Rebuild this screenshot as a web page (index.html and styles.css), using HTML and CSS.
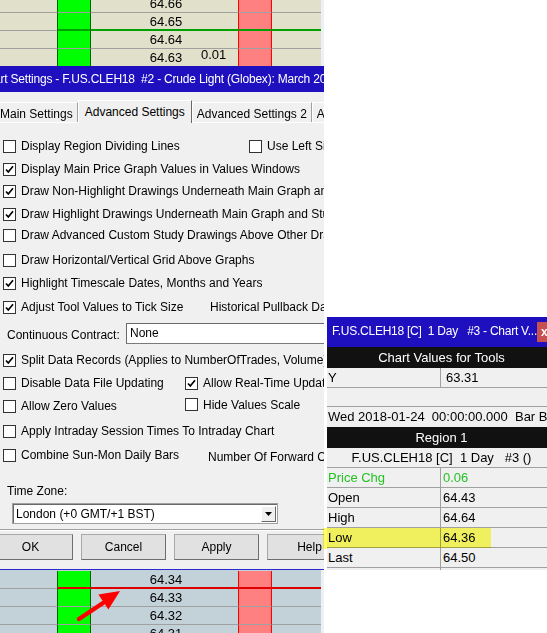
FILE: index.html
```html
<!DOCTYPE html>
<html lang="en">
<head>
<meta charset="utf-8">
<title>Chart Settings</title>
<link rel="stylesheet" href="styles.css">
</head>
<body>
<div class="screen">
  <div class="left">
    <div class="chart chart-top">
      <div class="ladder top-ladder">
        <div class="lrow"><span class="cell"></span><span class="cell g"></span><span class="cell p">64.66</span><span class="cell r"></span><span class="cell"></span></div>
        <div class="lrow mark-green"><span class="cell"></span><span class="cell g"></span><span class="cell p">64.65</span><span class="cell r"></span><span class="cell"></span></div>
        <div class="lrow"><span class="cell"></span><span class="cell g"></span><span class="cell p">64.64</span><span class="cell r"></span><span class="cell"></span></div>
        <div class="lrow"><span class="cell"></span><span class="cell g"></span><span class="cell p">64.63<span class="delta">0.01</span></span><span class="cell r"></span><span class="cell"></span></div>
      </div>
    </div>

    <div class="dialog">
      <div class="titlebar"><span class="title-text">Chart Settings - F.US.CLEH18  #2 - Crude Light (Globex): March 2018</span></div>
      <div class="dlg-body">
        <div class="tabs">
          <div class="tab">Main Settings</div>
          <div class="tab tab-active">Advanced Settings</div>
          <div class="tab">Advanced Settings 2</div>
          <div class="tab">Advanced Settings 3</div>
        </div>
        <div class="page">
          <div class="row">
            <label class="cb col-a"><span class="box"></span>Display Region Dividing Lines</label>
            <label class="cb"><span class="box"></span>Use Left Side Scale</label>
          </div>
          <div class="row mt3">
            <label class="cb"><span class="box"><svg viewBox="0 0 11 11" class="tick"><polyline points="2,5.5 4.3,8 9,2.3"/></svg></span>Display Main Price Graph Values in Values Windows</label>
          </div>
          <div class="row mt2">
            <label class="cb"><span class="box"><svg viewBox="0 0 11 11" class="tick"><polyline points="2,5.5 4.3,8 9,2.3"/></svg></span>Draw Non-Highlight Drawings Underneath Main Graph and Studies</label>
          </div>
          <div class="row mt3">
            <label class="cb"><span class="box"><svg viewBox="0 0 11 11" class="tick"><polyline points="2,5.5 4.3,8 9,2.3"/></svg></span>Draw Highlight Drawings Underneath Main Graph and Studies</label>
          </div>
          <div class="row mt1">
            <label class="cb"><span class="box"></span>Draw Advanced Custom Study Drawings Above Other Drawings</label>
          </div>
          <div class="row mt5">
            <label class="cb"><span class="box"></span>Draw Horizontal/Vertical Grid Above Graphs</label>
          </div>
          <div class="row mt3">
            <label class="cb"><span class="box"><svg viewBox="0 0 11 11" class="tick"><polyline points="2,5.5 4.3,8 9,2.3"/></svg></span>Highlight Timescale Dates, Months and Years</label>
          </div>
          <div class="row mt4">
            <label class="cb col-c"><span class="box"><svg viewBox="0 0 11 11" class="tick"><polyline points="2,5.5 4.3,8 9,2.3"/></svg></span>Adjust Tool Values to Tick Size</label>
            <span class="plain">Historical Pullback Data</span>
          </div>

          <div class="row cc-row mt6">
            <span class="cc-label">Continuous Contract:</span>
            <span class="edit">None</span>
          </div>

          <div class="row mt6">
            <label class="cb"><span class="box"><svg viewBox="0 0 11 11" class="tick"><polyline points="2,5.5 4.3,8 9,2.3"/></svg></span>Split Data Records (Applies to NumberOfTrades, Volume)</label>
          </div>
          <div class="row mt3">
            <label class="cb col-b"><span class="box"></span>Disable Data File Updating</label>
            <label class="cb"><span class="box"><svg viewBox="0 0 11 11" class="tick"><polyline points="2,5.5 4.3,8 9,2.3"/></svg></span>Allow Real-Time Updating</label>
          </div>
          <div class="row mt3">
            <label class="cb col-b"><span class="box"></span>Allow Zero Values</label>
            <label class="cb lift"><span class="box"></span>Hide Values Scale</label>
          </div>
          <div class="row mt5">
            <label class="cb"><span class="box"></span>Apply Intraday Session Times To Intraday Chart</label>
          </div>
          <div class="row mt4">
            <label class="cb col-d"><span class="box"></span>Combine Sun-Mon Daily Bars</label>
            <span class="plain drop">Number Of Forward Columns</span>
          </div>

          <div class="tz-label">Time Zone:</div>
          <div class="combo">
            <span class="combo-text">London (+0 GMT/+1 BST)</span>
            <span class="combo-btn"><svg viewBox="0 0 7 4" class="arrow"><polygon points="0,0 7,0 3.5,4"/></svg></span>
          </div>

          <div class="separator"></div>

          <div class="buttons">
            <span class="btn">OK</span>
            <span class="btn">Cancel</span>
            <span class="btn">Apply</span>
            <span class="btn">Help</span>
          </div>
        </div>
      </div>
    </div>

    <div class="chart chart-bottom">
      <div class="ladder">
        <div class="lrow mark-red"><span class="cell"></span><span class="cell g"></span><span class="cell p">64.34</span><span class="cell r"></span><span class="cell"></span></div>
        <div class="lrow"><span class="cell"></span><span class="cell g"></span><span class="cell p">64.33</span><span class="cell r"></span><span class="cell"></span></div>
        <div class="lrow"><span class="cell"></span><span class="cell g"></span><span class="cell p">64.32</span><span class="cell r"></span><span class="cell"></span></div>
        <div class="lrow"><span class="cell"></span><span class="cell g"></span><span class="cell p">64.31</span><span class="cell r"></span><span class="cell"></span></div>
      </div>
      <svg class="pointer" viewBox="0 0 140 62" width="140" height="62">
        <line x1="79" y1="49" x2="103" y2="33" class="shaft"/>
        <polygon points="120,21 108.4,39.6 98.4,24.6" class="head"/>
      </svg>
    </div>
  </div>

  <div class="right">
    <div class="cvw">
      <div class="cvw-title">
        <span class="cvw-title-text">F.US.CLEH18 [C]  1 Day   #3 - Chart V...</span>
        <span class="close">x</span>
      </div>
      <div class="cvw-head">Chart Values for Tools</div>
      <div class="cvw-row"><span class="k">Y</span><span class="v v-wide">63.31</span></div>
      <div class="cvw-blank"></div>
      <div class="cvw-date">Wed 2018-01-24  00:00:00.000  Bar Begin</div>
      <div class="cvw-head">Region 1</div>
      <div class="cvw-sym">F.US.CLEH18 [C]  1 Day   #3 ()</div>
      <div class="cvw-row up"><span class="k">Price Chg</span><span class="v">0.06</span></div>
      <div class="cvw-row"><span class="k">Open</span><span class="v">64.43</span></div>
      <div class="cvw-row"><span class="k">High</span><span class="v">64.64</span></div>
      <div class="cvw-row hl"><span class="k">Low</span><span class="v">64.36</span></div>
      <div class="cvw-row"><span class="k">Last</span><span class="v">64.50</span></div>
      <div class="cvw-tail"><span class="k"></span><span></span></div>
    </div>
  </div>
</div>
</body>
</html>
```

FILE: styles.css
```css
* { box-sizing: border-box; }
html, body { margin: 0; padding: 0; }
body {
  width: 547px;
  height: 633px;
  overflow: hidden;
  background: #ffffff;
  font-family: "Liberation Sans", Arial, sans-serif;
  color: #000;
}
.screen { display: flex; width: 547px; height: 633px; overflow: hidden; }
.left { flex: none; width: 324px; display: flex; flex-direction: column; }

/* price ladders */
.chart { position: relative; overflow: hidden; flex: none; border-right: 3px solid #EDF0F4; }
.chart-top { height: 66px; background: #E0E0CB; }
.chart-bottom { flex: 1; background: #C3D1D9; padding-top: 1px; }
.top-ladder { margin-top: -5px; }
.lrow { display: grid; grid-template-columns: 57px 34px 147px 34px 49px; height: 18px; }
.cell { border-bottom: 1px solid #A0A0A0; }
.g { background: #00FF00; border-left: 1px solid #006400; border-right: 1px solid #006400; }
.r { background: #FF8080; border-left: 1px solid #FF0000; border-right: 1px solid #FF0000; }
.p { position: relative; display: flex; align-items: center; justify-content: center; padding-left: 3px; font-size: 13px; }
.mark-green .cell:not(:first-child) { border-bottom: 2px solid #00A000; }
.mark-red .cell:not(:first-child) { border-bottom: 2px solid #E00000; }
.delta { position: absolute; left: 110px; top: -2px; font-size: 13px; }
.pointer { position: absolute; left: 0; top: 0; }
.shaft { stroke: #FF0000; stroke-width: 4.5; stroke-linecap: round; }
.head { fill: #FF0000; }

/* dialog */
.dialog { flex: none; background: #F0F0F0; overflow: hidden; }
.titlebar {
  height: 26px;
  background: #1F10BF;
  color: #fff;
  display: flex;
  align-items: center;
  font-size: 12px;
  letter-spacing: -0.2px;
  white-space: pre;
  overflow: hidden;
}
.title-text { margin-left: -21px; }
.dlg-body {
  height: 478px;
  border-bottom: 1px solid #2A2AD0;
  display: flex;
  flex-direction: column;
  overflow: hidden;
  font-size: 12px;
}
.tabs { height: 30px; display: flex; align-items: flex-end; margin-left: -5px; flex: none; }
.tab {
  flex: none;
  height: 20px;
  padding: 4px 4px 0 4px;
  line-height: 15px;
  border-top: 1px solid #fff;
  border-left: 1px solid #fff;
  border-right: 1px solid #A0A0A0;
  white-space: nowrap;
  background: #F0F0F0;
}
.tab-active {
  position: relative;
  z-index: 1;
  height: 23px;
  margin-bottom: -1px;
  padding: 4px 6px 0 6px;
  border-right-color: #696969;
}
.page { flex: 1; border-top: 1px solid #fff; padding-top: 13px; display: flex; flex-direction: column; }
.row { flex: none; display: flex; align-items: center; height: 20px; padding-left: 3px; white-space: nowrap; }
.mt1 { margin-top: 1px; }
.mt2 { margin-top: 2px; }
.mt3 { margin-top: 3px; }
.mt4 { margin-top: 4px; }
.mt5 { margin-top: 5px; }
.mt6 { margin-top: 6px; }
.cb { display: flex; align-items: center; flex: none; }
.box {
  flex: none;
  width: 13px;
  height: 13px;
  margin-right: 5px;
  border: 1px solid #333;
  background: #fff;
  display: flex;
  align-items: center;
  justify-content: center;
}
.tick { width: 11px; height: 11px; }
.tick polyline { fill: none; stroke: #000; stroke-width: 1.7; }
.col-a { width: 246px; }
.col-b { width: 182px; }
.col-c { width: 207px; }
.col-d { width: 205px; }
.lift { margin-top: -3px; }
.drop { padding-top: 3px; }
.plain { flex: none; }

.cc-row { height: 21px; padding-left: 7px; }
.cc-label { width: 119px; flex: none; padding-top: 3px; }
.edit {
  flex: none;
  width: 210px;
  height: 21px;
  padding-left: 3px;
  line-height: 19px;
  background: #fff;
  border: 1px solid #7A7A7A;
  border-top-color: #696969;
  border-left-color: #696969;
}

.tz-label { flex: none; margin-top: 19px; padding-left: 7px; line-height: 14px; }
.combo {
  flex: none;
  margin: 5px 0 0 12px;
  width: 266px;
  height: 21px;
  background: #fff;
  border: 1px solid #A0A0A0;
  box-shadow: inset 1px 1px 0 #696969;
  display: flex;
  align-items: center;
  padding: 0 1px 0 3px;
}
.combo-text { flex: 1; }
.combo-btn {
  flex: none;
  width: 15px;
  height: 16px;
  background: #F0F0F0;
  border: 1px solid;
  border-color: #fff #696969 #696969 #fff;
  display: flex;
  align-items: center;
  justify-content: center;
}
.arrow { width: 7px; height: 4px; }
.arrow polygon { fill: #000; }

.separator { flex: none; margin-top: 5px; height: 2px; border-top: 1px solid #A0A0A0; border-bottom: 1px solid #fff; }
.buttons { flex: none; margin: 3px 0 0 -12px; display: flex; gap: 8px; }
.btn {
  flex: none;
  width: 85px;
  height: 26px;
  display: flex;
  align-items: center;
  justify-content: center;
  background: #E1E1E1;
  border: 1px solid;
  border-color: #A8A8A8 #6E6E6E #6E6E6E #A8A8A8;
}

/* chart values window */
.right { flex: 1; padding: 317px 0 0 3px; }
.cvw { width: 229px; font-size: 13px; }
.cvw-title {
  height: 30px;
  background: #1F10BF;
  color: #fff;
  display: flex;
  align-items: center;
  padding: 0 0 3px 5px;
  font-size: 12px;
  letter-spacing: -0.25px;
  white-space: pre;
}
.cvw-title-text { flex: 1; overflow: hidden; }
.close {
  flex: none;
  width: 19px;
  height: 20px;
  margin-top: 3px;
  background: #C75050;
  color: #fff;
  font-weight: bold;
  letter-spacing: 0;
  display: flex;
  align-items: center;
  padding-left: 4px;
}
.cvw-head { height: 21px; line-height: 21px; background: #111; color: #fff; text-align: center; white-space: nowrap; }
.cvw-row {
  position: relative;
  display: grid;
  grid-template-columns: 114px 1fr;
  height: 20px;
  line-height: 19px;
  background: #F0F0F0;
  border-bottom: 1px solid #A0A0A0;
  white-space: nowrap;
}
.k { border-right: 1px solid #A0A0A0; padding-left: 1px; }
.v { padding-left: 2px; }
.v-wide { padding-left: 5px; }
.cvw-blank { height: 19px; background: #F0F0F0; border-bottom: 1px solid #A0A0A0; }
.cvw-date { height: 20px; line-height: 20px; padding-left: 1px; background: #F0F0F0; white-space: pre; overflow: hidden; }
.cvw-sym { height: 20px; line-height: 19px; text-align: center; background: #F0F0F0; border-bottom: 1px solid #A0A0A0; white-space: pre; }
.up { color: #22C322; }
.hl::after {
  content: "";
  position: absolute;
  left: -4px;
  top: 0;
  width: 168px;
  height: 21px;
  background: #FFFF64;
  mix-blend-mode: multiply;
}
.cvw-tail { display: grid; grid-template-columns: 114px 1fr; height: 2px; background: #F0F0F0; }
```
